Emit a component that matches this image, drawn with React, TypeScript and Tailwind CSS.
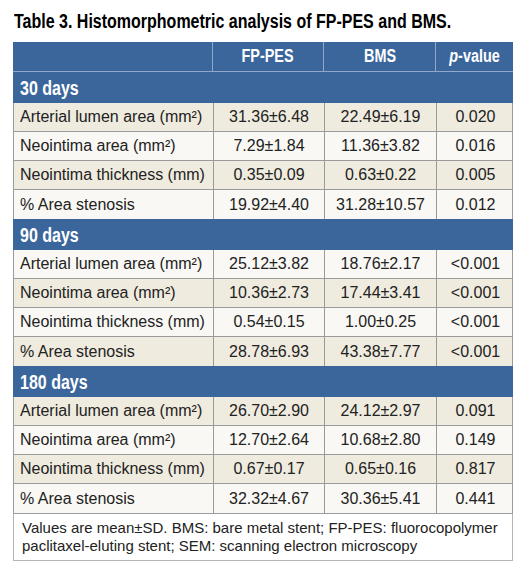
import React from "react";

type Row = { label: string; a: string; b: string; p: string };

const sections: { title: string; rows: Row[]; shade: boolean[] }[] = [
  {
    title: "30 days",
    shade: [true, false, true, false],
    rows: [
      { label: "Arterial lumen area (mm²)", a: "31.36±6.48", b: "22.49±6.19", p: "0.020" },
      { label: "Neointima area (mm²)", a: "7.29±1.84", b: "11.36±3.82", p: "0.016" },
      { label: "Neointima thickness (mm)", a: "0.35±0.09", b: "0.63±0.22", p: "0.005" },
      { label: "% Area stenosis", a: "19.92±4.40", b: "31.28±10.57", p: "0.012" },
    ],
  },
  {
    title: "90 days",
    shade: [false, true, false, true],
    rows: [
      { label: "Arterial lumen area (mm²)", a: "25.12±3.82", b: "18.76±2.17", p: "<0.001" },
      { label: "Neointima area (mm²)", a: "10.36±2.73", b: "17.44±3.41", p: "<0.001" },
      { label: "Neointima thickness (mm)", a: "0.54±0.15", b: "1.00±0.25", p: "<0.001" },
      { label: "% Area stenosis", a: "28.78±6.93", b: "43.38±7.77", p: "<0.001" },
    ],
  },
  {
    title: "180 days",
    shade: [true, false, true, false],
    rows: [
      { label: "Arterial lumen area (mm²)", a: "26.70±2.90", b: "24.12±2.97", p: "0.091" },
      { label: "Neointima area (mm²)", a: "12.70±2.64", b: "10.68±2.80", p: "0.149" },
      { label: "Neointima thickness (mm)", a: "0.67±0.17", b: "0.65±0.16", p: "0.817" },
      { label: "% Area stenosis", a: "32.32±4.67", b: "30.36±5.41", p: "0.441" },
    ],
  },
];

// no condensed face installed, so squeeze Liberation Sans Bold
const cond = "inline-block whitespace-nowrap font-bold scale-x-[0.8]";

export default function App() {
  return (
    <div className="w-[526px] h-[582px] overflow-hidden bg-white pt-[9px] font-['Liberation_Sans',Arial,sans-serif]">
      <h1 className="pl-[14px] text-[20px] leading-[24px] text-black">
        <span className={`${cond} origin-left`}>Table 3. Histomorphometric analysis of FP-PES and BMS.</span>
      </h1>

      <div className="ml-[13px] mt-[9px] w-[500px]">
        {/* column headings */}
        <div className="grid grid-cols-[200px_111px_112px_77px] h-[30px] bg-[#3b669c] border-b border-[#8fa8cc] text-white text-[18px]">
          <div className="border-r border-[#8fa8cc]" />
          <div className="flex items-center justify-center border-r border-[#8fa8cc]">
            <span className={cond}>FP-PES</span>
          </div>
          <div className="flex items-center justify-center border-r border-[#8fa8cc]">
            <span className={cond}>BMS</span>
          </div>
          <div className="flex items-center justify-center">
            <span className={cond}>
              <i>p</i>-value
            </span>
          </div>
        </div>

        {sections.map((s) => (
          <div key={s.title}>
            <div className="flex items-center h-[31px] bg-[#3b669c] pl-[7px] text-white text-[20px]">
              <span className={`${cond} origin-left`}>{s.title}</span>
            </div>
            {s.rows.map((r, i) => (
              <div
                key={i}
                className={`grid grid-cols-[200px_111px_112px_77px] h-[29px] border-l border-r border-[#9a9a9a] text-[16px] text-[#222] ${
                  i < 3 ? "border-b" : ""
                } ${s.shade[i] ? "bg-[#efebdf]" : "bg-[#f9f8f4]"}`}
              >
                <div className="flex items-center pl-[6px] border-r border-[#9a9a9a] whitespace-nowrap">{r.label}</div>
                <div className="flex items-center justify-center border-r border-[#9a9a9a]">{r.a}</div>
                <div className="flex items-center justify-center border-r border-[#9a9a9a]">{r.b}</div>
                <div className="flex items-center justify-center">{r.p}</div>
              </div>
            ))}
          </div>
        ))}

        <div className="border-t border-[#9a9a9a] border-l border-r border-b border-l-[#b5b5b5] border-r-[#b5b5b5] border-b-[#b5b5b5] h-[48px] px-[8px] pt-[5px] text-[15px] leading-[18px] text-[#222]">
          Values are mean±SD. BMS: bare metal stent; FP-PES: fluorocopolymer paclitaxel-eluting stent; SEM: scanning electron microscopy
        </div>
      </div>
    </div>
  );
}
